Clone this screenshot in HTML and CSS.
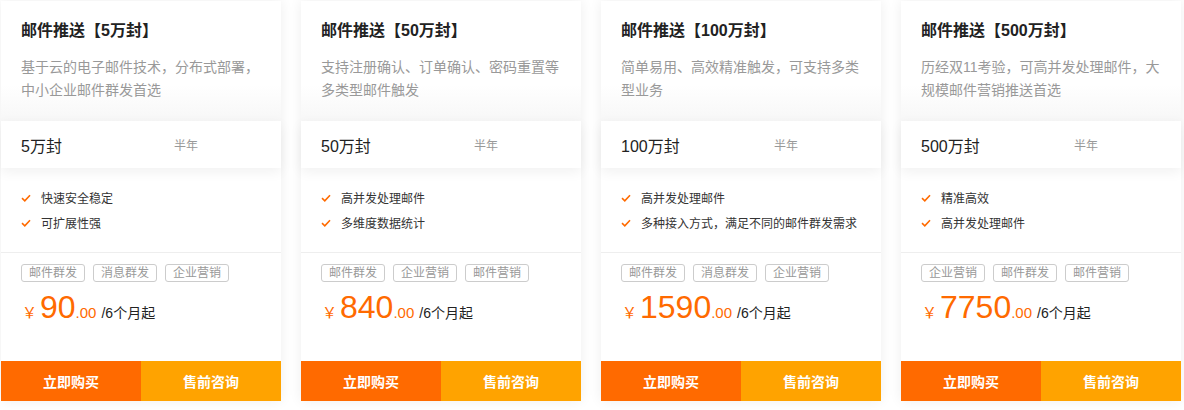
FILE: index.html
```html
<!DOCTYPE html>
<html lang="zh">
<head>
<meta charset="utf-8">
<link rel="stylesheet" href="styles.css">
</head>
<body>
<div class="cards">
  <div class="card">
    <div class="head">
      <h3 class="title">邮件推送【5万封】</h3>
      <p class="desc">基于云的电子邮件技术，分布式部署，中小企业邮件群发首选</p>
    </div>
    <div class="spec"><span class="spec-name">5万封</span><span class="spec-time">半年</span></div>
    <ul class="feats">
      <li><svg class="chk" viewBox="0 0 10 8"><path d="M1 4.2 L3.8 6.8 L9 1.2"/></svg>快速安全稳定</li>
      <li><svg class="chk" viewBox="0 0 10 8"><path d="M1 4.2 L3.8 6.8 L9 1.2"/></svg>可扩展性强</li>
    </ul>
    <div class="bottom">
      <div class="tags"><span class="tag">邮件群发</span><span class="tag">消息群发</span><span class="tag">企业营销</span></div>
      <div class="price"><span class="yen">￥</span><span class="num">90</span><span class="dec">.00</span><span class="per">/6个月起</span></div>
    </div>
    <div class="btns"><a class="buy">立即购买</a><a class="ask">售前咨询</a></div>
  </div>
  <div class="card">
    <div class="head">
      <h3 class="title">邮件推送【50万封】</h3>
      <p class="desc">支持注册确认、订单确认、密码重置等多类型邮件触发</p>
    </div>
    <div class="spec"><span class="spec-name">50万封</span><span class="spec-time">半年</span></div>
    <ul class="feats">
      <li><svg class="chk" viewBox="0 0 10 8"><path d="M1 4.2 L3.8 6.8 L9 1.2"/></svg>高并发处理邮件</li>
      <li><svg class="chk" viewBox="0 0 10 8"><path d="M1 4.2 L3.8 6.8 L9 1.2"/></svg>多维度数据统计</li>
    </ul>
    <div class="bottom">
      <div class="tags"><span class="tag">邮件群发</span><span class="tag">企业营销</span><span class="tag">邮件营销</span></div>
      <div class="price"><span class="yen">￥</span><span class="num">840</span><span class="dec">.00</span><span class="per">/6个月起</span></div>
    </div>
    <div class="btns"><a class="buy">立即购买</a><a class="ask">售前咨询</a></div>
  </div>
  <div class="card">
    <div class="head">
      <h3 class="title">邮件推送【100万封】</h3>
      <p class="desc">简单易用、高效精准触发，可支持多类型业务</p>
    </div>
    <div class="spec"><span class="spec-name">100万封</span><span class="spec-time">半年</span></div>
    <ul class="feats">
      <li><svg class="chk" viewBox="0 0 10 8"><path d="M1 4.2 L3.8 6.8 L9 1.2"/></svg>高并发处理邮件</li>
      <li><svg class="chk" viewBox="0 0 10 8"><path d="M1 4.2 L3.8 6.8 L9 1.2"/></svg>多种接入方式，满足不同的邮件群发需求</li>
    </ul>
    <div class="bottom">
      <div class="tags"><span class="tag">邮件群发</span><span class="tag">消息群发</span><span class="tag">企业营销</span></div>
      <div class="price"><span class="yen">￥</span><span class="num">1590</span><span class="dec">.00</span><span class="per">/6个月起</span></div>
    </div>
    <div class="btns"><a class="buy">立即购买</a><a class="ask">售前咨询</a></div>
  </div>
  <div class="card">
    <div class="head">
      <h3 class="title">邮件推送【500万封】</h3>
      <p class="desc">历经双11考验，可高并发处理邮件，大规模邮件营销推送首选</p>
    </div>
    <div class="spec"><span class="spec-name">500万封</span><span class="spec-time">半年</span></div>
    <ul class="feats">
      <li><svg class="chk" viewBox="0 0 10 8"><path d="M1 4.2 L3.8 6.8 L9 1.2"/></svg>精准高效</li>
      <li><svg class="chk" viewBox="0 0 10 8"><path d="M1 4.2 L3.8 6.8 L9 1.2"/></svg>高并发处理邮件</li>
    </ul>
    <div class="bottom">
      <div class="tags"><span class="tag">企业营销</span><span class="tag">邮件群发</span><span class="tag">邮件营销</span></div>
      <div class="price"><span class="yen">￥</span><span class="num">7750</span><span class="dec">.00</span><span class="per">/6个月起</span></div>
    </div>
    <div class="btns"><a class="buy">立即购买</a><a class="ask">售前咨询</a></div>
  </div>
</div>
</body>
</html>
```
FILE: styles.css
```css
* { box-sizing: border-box; }
html, body { margin: 0; padding: 0; background: #fff; }
body {
  font-family: "Liberation Sans", "Noto Sans CJK SC", sans-serif;
  color: #333;
  width: 1184px;
  height: 410px;
  overflow: hidden;
}
.cards {
  display: flex;
  gap: 20px;
  padding: 1px 1px 0 1px;
}
.card {
  width: 280px;
  height: 400px;
  background: #fff;
  box-shadow: 0 0 12px rgba(0, 0, 0, 0.07);
  display: flex;
  flex-direction: column;
}
.head {
  height: 120px;
  padding: 19px 20px 0 20px;
  background: linear-gradient(#fff 70%, #f7f7f7 100%);
}
.title {
  margin: 0;
  font-size: 16px;
  line-height: 22px;
  font-weight: bold;
  color: #222;
}
.desc {
  margin: 14px 0 0 0;
  font-size: 14px;
  line-height: 23px;
  color: #999;
}
.spec {
  height: 47px;
  display: flex;
  align-items: center;
  padding-left: 20px;
  background: #fff;
  box-shadow: 0 4px 12px rgba(0, 0, 0, 0.06);
  position: relative;
}
.spec-name {
  width: 153px;
  font-size: 16px;
  color: #222;
}
.spec-time {
  font-size: 12px;
  color: #999;
}
.feats {
  list-style: none;
  margin: 0;
  padding: 17px 20px 0 20px;
  height: 85px;
  border-bottom: 1px solid #eee;
}
.feats li {
  display: flex;
  align-items: center;
  height: 25px;
  font-size: 12px;
  color: #333;
}
.chk {
  width: 10px;
  height: 8px;
  margin-right: 10px;
  fill: none;
  stroke: #ff6a00;
  stroke-width: 1.6;
}
.bottom {
  flex: 1;
  padding: 11px 20px 0 20px;
}
.tags {
  display: flex;
  gap: 8px;
}
.tag {
  height: 18px;
  line-height: 16px;
  padding: 0 7px;
  border: 1px solid #ccc;
  border-radius: 3px;
  font-size: 12px;
  color: #999;
}
.price {
  margin-top: 5px;
  display: flex;
  align-items: baseline;
  color: #ff6a00;
}
.yen {
  font-size: 15px;
  margin-left: 1px;
  margin-right: 3px;
}
.num {
  font-size: 32px;
  line-height: 40px;
}
.dec {
  font-size: 15px;
}
.per {
  font-size: 14px;
  color: #222;
  margin-left: 5px;
}
.btns {
  display: flex;
  height: 40px;
}
.btns a {
  flex: 1;
  display: flex;
  align-items: center;
  justify-content: center;
  color: #fff;
  font-size: 14px;
  font-weight: bold;
}
.buy { background: #ff6a00; }
.ask { background: #ffa300; }
```
